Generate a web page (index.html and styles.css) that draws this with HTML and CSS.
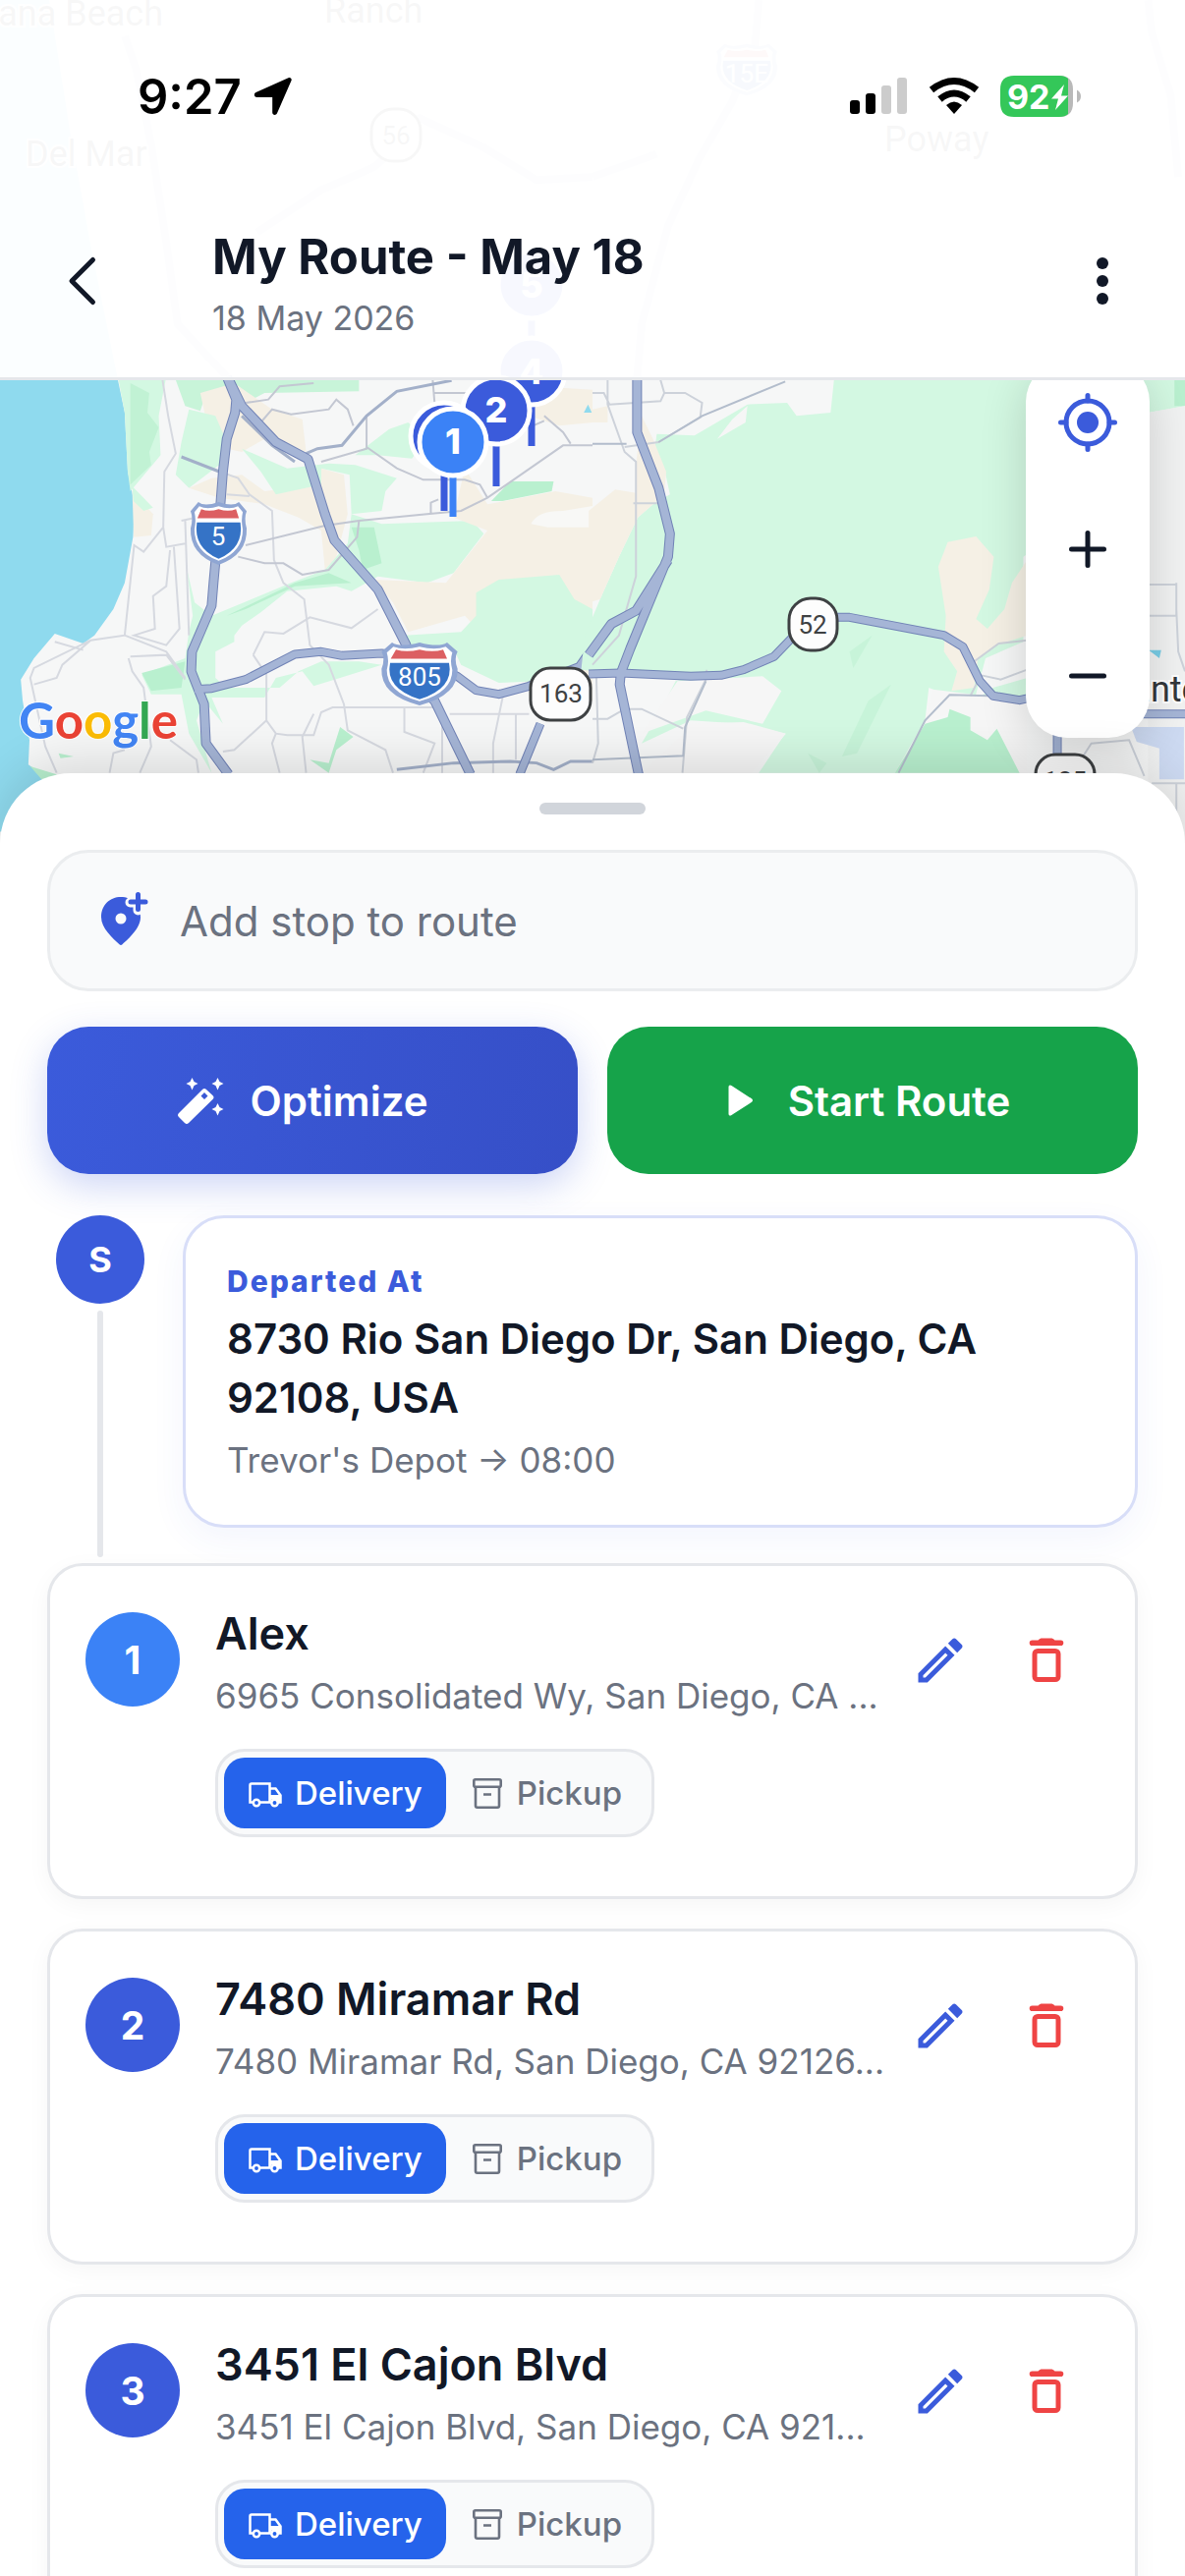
FILE: index.html
```html
<!DOCTYPE html>
<html lang="en">
<head>
<meta charset="utf-8">
<meta name="viewport" content="width=device-width, initial-scale=1">
<title>My Route - May 18</title>
<link rel="stylesheet" href="styles.css">
</head>
<body>
<svg class="sprite" aria-hidden="true">
  <symbol id="i-pencil" viewBox="0 0 24 24"><path d="M14.06 9l.94.94L5.92 19H5v-.92L14.06 9M17.66 3c-.25 0-.51.1-.7.29l-1.83 1.83 3.75 3.75 1.83-1.83c.39-.39.39-1.04 0-1.41l-2.34-2.34c-.2-.2-.45-.29-.71-.29M14.06 6.19L3 17.25V21h3.75L17.81 9.94l-3.75-3.75z" fill="currentColor"/></symbol>
  <symbol id="i-trash" viewBox="0 0 60 60"><path d="M15.500 9.500H21.500c1.500-1.500 2.500-2 4-2h9c1.500 0 2.500.5 4 2h6a2.800 2.800 0 0 1 0 5.600h-29a2.800 2.800 0 0 1 0-5.600z" fill="currentColor"/><rect x="18" y="20.500" width="24" height="29" rx="3" fill="none" stroke="currentColor" stroke-width="5"/></symbol>
  <symbol id="i-truck" viewBox="0 0 36 36"><path d="M5 27.500H2.500V10q0-1.500 1.500-1.500h18.500v19H13M22.500 13.500h6l5 7v7H31M22.500 27.500h1" fill="none" stroke="currentColor" stroke-width="2.500"/><path d="M23 20h11v7.500h-3.500a4 4 0 0 0-7.500-1z" fill="currentColor"/><circle cx="9" cy="28" r="3.200" fill="none" stroke="currentColor" stroke-width="2.500"/><circle cx="27.500" cy="28" r="3.200" fill="none" stroke="currentColor" stroke-width="2.500"/></symbol>
  <symbol id="i-box" viewBox="0 0 36 36"><g fill="none" stroke="currentColor" stroke-width="2.600"><rect x="4.300" y="4.300" width="27.400" height="7.400" rx="1.500"/><path d="M6 11.700V31q0 1.700 1.700 1.700h20.600Q30 32.700 30 31V11.700M14 19.500h8"/></g></symbol>
  <symbol id="i-shield" viewBox="0 0 60 64" preserveAspectRatio="none"><path d="M9 1q6 5 21 0q15 5 21 0l8 9q-3 7 0 17q1 26-29 36Q0 53 1 27q3-10 0-17z" fill="#8fa6d3"/><path d="M10 5q8 4 20 0q12 4 20 0l5 6q-2 8 0 17q0 22-25 31Q5 50 5 28q2-9 0-17z" fill="#fff"/><path d="M12 8q8 3 18 0q10 3 18 0l3 9H8z" fill="#dc5f62"/><path d="M7.500 21h45q4 25-22.500 36Q3.500 46 7.500 21z" fill="#3573c6"/></symbol>
</svg>

<div class="app">
  <section class="map" aria-label="Route map">
    <svg class="map-canvas" viewBox="0 0 1206 870" preserveAspectRatio="xMidYMin slice">
      <rect width="1206" height="870" fill="#f6f7f7"/>
      <!-- western half: terrain, streets, freeways -->
      <g transform="translate(0 380) scale(.3846 .3333)">
        <path d="M-10-1140H130L185-740 240-390 312 20 330 120 338 300 356 400 352 500 330 640 300 720 250 800 220 825 145 795 90 870 55 935 60 1000 78 1120 75 1195 125 1235V1400H-10z" fill="#8fdaee"/>
        <path d="M312 10H440L420 130 425 250 345 360 338 300 330 120z" fill="#d3f8e2"/>
        <path d="M345 30 395 60 390 120 420 165 395 240 400 280 345 340z" fill="#b9f0cf" opacity=".7"/>
        <path d="M350 360 405 430 400 495 354 500z" fill="#f5f0e5"/><path d="M350 345 405 410 380 420 353 390z" fill="#d3f8e2"/>
        <path d="M465 20H950V55L700 60 650 90 540 80 530 115 490 100z" fill="#c8f4d9"/>
        <path d="M530 60 620 30 720 110 800 140 810 240 700 200 640 240 560 220z" fill="#f5f0e5"/>
        <path d="M500 110 570 130 600 210 580 280 500 350 465 310 480 210z" fill="#d3f8e2"/>
        <path d="M560 320 640 310 700 360 850 340 850 290 910 310 920 430 890 560 860 600 850 480 790 440 700 400 580 380 500 350z" fill="#f5f0e5"/>
        <path d="M640 230 760 290 870 275 940 280 1050 320 1020 360 1010 420 930 430 925 310 850 290 850 340 730 370 690 300z" fill="#d3f8e2"/>
        <path d="M930 430 1010 460 1250 450 1280 490 1200 610 1130 640 1000 620 930 665 890 650 760 665 690 730 640 770 620 800 620 820 570 850 570 930 600 960 740 960 790 910 850 880 950 880 1010 890 900 930 830 955 800 910 730 930 700 990 560 990 590 1070 540 1000 520 1060 560 1220 500 1100 480 980 400 980 375 920 490 870 500 790 510 740 495 600 515 700 560 740 770 640 860 600 920 520z" fill="#d3f8e2"/>
        <path d="M950 540 930 470 990 470 1010 580 960 600zM600 740 780 640 870 610 930 640 780 650 650 720zM375 915 490 880 480 960 400 970zM1300 390 1350 330 1465 330 1460 360 1330 390z" fill="#b9f0cf"/>
        <path d="M940 250 1030 170 1080 150 1130 200 1090 260 1000 250z" fill="#d3f8e2"/>
        <path d="M1290 60 1420 40 1568 50V150L1480 160 1400 130zM1230 290 1290 400 1470 360 1568 380V1000H1440L1230 740 1080 790 1040 700 990 630 1180 640 1290 480 1200 440z" fill="#f5f0e5"/>
        <path d="M1405 460Q1420 420 1490 420L1568 405V470H1450z" fill="#f8f8f6"/>
        <path d="M1260 670 1320 630 1480 615 1520 690 1568 720V890L1430 940 1320 945 1220 890 1200 840 1080 830 1070 800 1220 790 1260 740z" fill="#d3f8e2"/>
        <path d="M900 1080 935 1110 890 1150 870 1220 820 1180 870 1190zM155 1160 195 1170 160 1175zM80 1200 150 1225V1240H110z" fill="#b9f0cf"/>
        <path d="M1545 120 1556 95 1566 120z" fill="#8fdaee"/>
        <path d="M430 20 445 130 465 245 435 300 432 470 380 545 355 525 330 800 240 815 90 900 80 930 120 1140 150 1220M580 300 630 320 660 370 720 420 725 570 750 640 805 690 820 830 870 890 910 1010 920 1090 1020 1150 1040 1220M432 470 440 530 490 520M460 530 475 780 440 830 355 800 410 780 405 680 440 650 450 540M480 450 520 440M490 450 500 800M340 870 350 910 380 960 400 1140 370 1220M345 865 440 860 490 935M330 800 440 850 490 930M145 820 220 845M90 950 150 930 165 890 240 815M290 1220 300 1160 330 1150M450 1120 520 1180 525 1220M670 860 700 790 750 795 820 745 930 778 1000 720M670 860 705 920V1060L620 1150 590 1155M705 1060 730 1100 760 1105 830 1105 850 1035 880 1020H1170V1220M830 1040 800 1110 810 1220M730 1100 720 1130 740 1220M1070 1020V1095L1150 1130 1120 1220M1190 1040H1400M1330 990 1305 1130V1220M1365 1040V1180M600 370 660 375" fill="none" stroke="#d6d9e0" stroke-width="2" vector-effect="non-scaling-stroke"/>
        <path d="M650 525 860 465 950 450 1130 430 1220 420 1290 380 1490 220H1568M950 450 945 500 870 600 800 615 750 580 700 580 630 560M690 150 720 110 770 125 870 110 890 80 920 110 935 160M970 130V230L850 270M970 225 1050 290 1120 325H1230L1270 340 1290 380M1140 430V395L1160 385M1145 20 1150 90 1200 90M1150 60H1240M1440 130 1490 180 1510 215M1410 160 1440 145M650 90 710 80 740 40 830 30" fill="none" stroke="#c3c7d2" stroke-width="2" vector-effect="non-scaling-stroke"/>
        <path d="M810 245 840 230 905 220 970 130 1050 55 1195 22M480 255 580 300M640 130 720 220 780 270M1050 1210 1200 1190 1350 1185 1420 1190 1465 1210 1510 1185H1568" fill="none" stroke="#a3b0c9" stroke-width="3" vector-effect="non-scaling-stroke"/>
        <g fill="none" stroke-linejoin="round">
          <g stroke="#7183b6">
            <path d="M600 10 625 80 622 120 600 200 590 300 580 450 565 640 560 710 508 850 506 910 540 1010 545 1130 605 1225" stroke-width="10" vector-effect="non-scaling-stroke"/>
            <path d="M606 20 640 100 730 210 815 262 860 430 885 510 1000 660 1075 830 1110 960 1150 1000 1245 1225" stroke-width="10" vector-effect="non-scaling-stroke"/>
            <path d="M515 965 560 962 650 935 780 858 850 850 905 862 1010 855 1110 870 1210 925 1260 968 1320 980 1400 955 1568 880M1530 900 1590 800M1375 1225 1430 1070" stroke-width="9" vector-effect="non-scaling-stroke"/>
          </g>
          <g stroke="#a5b5d6">
            <path d="M600 10 625 80 622 120 600 200 590 300 580 450 565 640 560 710 508 850 506 910 540 1010 545 1130 605 1225" stroke-width="8" vector-effect="non-scaling-stroke"/>
            <path d="M606 20 640 100 730 210 815 262 860 430 885 510 1000 660 1075 830 1110 960 1150 1000 1245 1225" stroke-width="8" vector-effect="non-scaling-stroke"/>
            <path d="M515 965 560 962 650 935 780 858 850 850 905 862 1010 855 1110 870 1210 925 1260 968 1320 980 1400 955 1568 880M1530 900 1590 800M1375 1225 1430 1070" stroke-width="7" vector-effect="non-scaling-stroke"/>
          </g>
          <path d="M330-1030 360-930 400-700 440-400 470-150 600 10M680-430 850-560 990-630 1050-690 1110-780 1280-690 1420-590 1568-600" stroke="#c6d0e4" stroke-width="8" vector-effect="non-scaling-stroke"/>
        </g>
      </g>
      <!-- eastern half -->
      <g transform="translate(603 380) scale(.3846 .3333)">
        <path d="M640 10H1568V100L1470 120V300L1140 560V820L1040 870 1010 1000 1060 960 1150 930 1160 980 1000 1010 890 960 880 1060 800 1220H440L510 1100 400 1070 260 1060 130 1130 180 1030 220 940 300 915 60 915-30 905-20 800 20 690 70 560 120 440 165 395 205 370 190 290 165 230 170 185 270 190 410 95 515 90 540 130 630 120z" fill="#d3f8e2"/>
        <path d="M130 130 160 200 195 300 190 370 120 440 70 560 20 690-10 700V420L60 355 115 365 115 280zM0 110 40 100V150H0z" fill="#f5f0e5"/>
        <path d="M940 515 1015 498 1062 560 1050 660 1015 750 1045 780 1090 720 1110 640 1150 570V800L1070 830 1020 870 1010 960 950 970 965 910 930 850 935 740 915 590z" fill="#f5f0e5"/>
        <path d="M330 200 370 140 410 100 405 150zM225 940 450 925 500 970 450 1070 300 1030 130 1100zM250 1070 400 1065 512 1100 420 1220H130L240 1100zM900 965 1040 985 1150 1000V1220H1110L1070 1080 1045 1120 940 1040 880 1070z" fill="#f6f6f6"/>
        <path d="M940 1050 945 1025 1000 1050 1000 1090 1045 1120 1070 1085 1130 1220H800L880 1070zM1540 20H1568V100H1540z" fill="#b9f0cf"/>
        <path d="M740 800 690 900 680 850zM790 950 700 1160 660 1170 730 1000zM570 1160 620 1190 600 1220z" fill="#bff2d3" opacity=".6"/>
        <path d="M1470 120 1568 100V1400H1470z" fill="#f1f2f2"/>
        <path d="M1425 1080H1565V1240H1500V1145L1440 1125z" fill="#cddaf2"/>
        <path d="M1472 845H1505L1500 870z" fill="#79cde6"/>
        <path d="M40 20V95L85 240 115 270V620L70 800 0 890M0 60H30L45 95 180 85 190 60H245L290 90 285 135 175 210 85 225M180 20 190 60M108 397H175M0 1055 40 1055 85 1025H130L240 1085M10 920 15 1130 0 1190M302 905V930L250 1050 238 1220M1010 880 1075 825 1150 815M1020 920 1080 935 1150 905M1470 645H1545V720L1550 850 1568 910M1470 740H1545V640M1270 1220 1320 1130 1420 1120 1460 1230M1480 1252H1568M1545 1250V1400M1000 985 1020 940" fill="none" stroke="#cdd2da" stroke-width="2" vector-effect="non-scaling-stroke"/>
        <path d="M510 25 290 130 175 210M0 1180 240 1168 245 1080 300 940M0 215H90M810 1220 880 1060 945 982 1050 985" fill="none" stroke="#b3bdcc" stroke-width="2" vector-effect="non-scaling-stroke"/>
        <g fill="none" stroke-linejoin="round">
          <path d="M118 10V180L175 350 205 490 200 560 100 840 75 915 72 950 122 1225M-10 860 50 765 115 725 200 570" stroke="#7183b6" stroke-width="10" vector-effect="non-scaling-stroke"/>
          <path d="M-10 918 75 915 260 925 340 922 400 905 480 865 580 745H680L930 800 980 835 1025 940 1060 985 1130 998 1200 980 1400 1040H1568M1230 1100V1180" stroke="#7183b6" stroke-width="9" vector-effect="non-scaling-stroke"/>
          <path d="M118 10V180L175 350 205 490 200 560 100 840 75 915 72 950 122 1225M-10 860 50 765 115 725 200 570" stroke="#a5b5d6" stroke-width="8" vector-effect="non-scaling-stroke"/>
          <path d="M-10 918 75 915 260 925 340 922 400 905 480 865 580 745H680L930 800 980 835 1025 940 1060 985 1130 998 1200 980 1400 1040H1568M1230 1100V1180" stroke="#a5b5d6" stroke-width="7" vector-effect="non-scaling-stroke"/>
          <path d="M440-1140 430-1000 370-830 280-650 200-450 130-150 118 10M0-600 170-670M1470-1140 1480-1040 1530-850 1550-600" stroke="#c6d0e4" stroke-width="8" vector-effect="non-scaling-stroke"/>
        </g>
      </g>
      <!-- highway shields -->
      <use href="#i-shield" x="193" y="510" width="59" height="66"/>
      <use href="#i-shield" x="387" y="653" width="80" height="66"/>
      <use href="#i-shield" x="728" y="44" width="64" height="54"/>
      <g fill="#fdfdfd" stroke="#3e4143" stroke-width="3">
        <rect x="540" y="680" width="61" height="53" rx="20"/>
        <rect x="803" y="609" width="49" height="53" rx="22"/>
        <rect x="1054" y="768" width="60" height="53" rx="20"/>
        <rect x="378" y="111" width="50" height="53" rx="22"/>
      </g>
      <g class="map-shield-text">
        <text x="222" y="555" fill="#fff">5</text>
        <text x="427" y="698" fill="#fff">805</text>
        <text x="760" y="84" fill="#fff">15E</text>
        <text x="571" y="715">163</text>
        <text x="827" y="645">52</text>
        <text x="1084" y="804">125</text>
        <text x="403" y="147">56</text>
      </g>
      <g class="map-place">
        <text x="166" y="26" text-anchor="end">Solana Beach</text>
        <text x="330" y="23">Ranch</text>
        <text x="26" y="169">Del Mar</text>
        <text x="900" y="154">Poway</text>
        <text x="1130" y="714">Santee</text>
      </g>
      <text class="map-logo" x="19" y="752"><tspan fill="#4285f4">G</tspan><tspan fill="#ea4335">o</tspan><tspan fill="#fbbc05">o</tspan><tspan fill="#4285f4">g</tspan><tspan fill="#34a853">l</tspan><tspan fill="#ea4335">e</tspan></text>
      <!-- stop pins -->
      <g stroke-width="7" fill="none">
        <path d="M541 325V343M541 410V454M505 450V495M452 480V520" stroke="#3b5bdb"/><path d="M461 485V526" stroke="#3b82f6"/>
      </g>
      <g fill="#3b5bdb" stroke="#fff" stroke-width="5">
        <circle cx="541" cy="290" r="34"/><circle cx="541" cy="378" r="34"/><circle cx="505" cy="418" r="34"/><circle cx="452" cy="444" r="34"/><circle cx="461" cy="450" r="34" fill="#3b82f6"/>
      </g>
      <g class="map-pin-text">
        <text x="541" y="303">5</text><text x="541" y="391">4</text><text x="505" y="430">2</text><text x="461" y="462">1</text>
      </g>
    </svg>
    <div class="map-controls">
      <button type="button" aria-label="My location"><svg viewBox="0 0 60 60"><g fill="none" stroke="#3b5bdb" stroke-width="5" stroke-linecap="round"><circle cx="30" cy="30" r="22"/><path d="M30 2.500V8M30 52v5.500M2.500 30H8M52 30h5.500"/></g><circle cx="30" cy="30" r="11" fill="#3b5bdb"/></svg></button>
      <button type="button" aria-label="Zoom in"><svg viewBox="0 0 60 60"><path d="M30 13.500v33M13.500 30h33" stroke="#111827" stroke-width="5" stroke-linecap="round"/></svg></button>
      <button type="button" aria-label="Zoom out"><svg viewBox="0 0 60 60"><path d="M13.500 30h33" stroke="#111827" stroke-width="5" stroke-linecap="round"/></svg></button>
    </div>
  </section>

  <header class="top">
    <div class="status">
      <div class="status-time"><span>9:27</span>
        <svg width="40" height="40" viewBox="0 0 40 40"><path d="M35.500 1.200c2-.9 3.800.9 3 2.900L24 37.300c-1.200 2.700-4.800 2-4.800-.8V21H3.500C.5 21-.1 17.300 2.500 16.100z" fill="#000"/></svg>
      </div>
      <div class="status-icons">
        <svg width="60" height="40" viewBox="0 0 60 40"><rect x="1" y="24" width="10" height="14" rx="3"/><rect x="17" y="17" width="10" height="21" rx="3"/><rect x="33" y="9" width="10" height="29" rx="3" fill="#ccc"/><rect x="49" y="1" width="10" height="37" rx="3" fill="#ccc"/></svg>
        <svg width="52" height="40" viewBox="0 0 52 40"><g fill="none" stroke="#000" stroke-width="7"><path d="M3 13.500Q26-4.500 49 13.500"/><path d="M11.500 23Q26 11 40.500 23"/></g><path d="M18 29q8-7 16 0l-8 9z"/></svg>
        <svg width="84" height="42" viewBox="0 0 84 42"><path d="M14 0h46q14 0 14 14v14q0 14-14 14z" fill="#b9b9b9"/><path d="M14 0h46q6 0 9 3v36q-3 3-9 3H14Q0 42 0 28V14Q0 0 14 0z" fill="#34c759"/><path d="M78 14.500q4 2 4 6.500t-4 6.500z" fill="#b9b9b9"/><text class="battery-text" x="7" y="34">92</text><path d="M65 9 52 23.500h7L56 35l13-14.500h-7z" fill="#fff"/></svg>
      </div>
    </div>
    <div class="bar">
      <button type="button" class="icon-btn" aria-label="Back"><svg width="60" height="60" viewBox="0 0 60 60"><path d="M40.500 8.500 19 30l21.500 21.500" fill="none" stroke="#111827" stroke-width="5" stroke-linecap="round" stroke-linejoin="round"/></svg></button>
      <div class="bar-text">
        <h1>My Route - May 18</h1>
        <p>18 May 2026</p>
      </div>
      <button type="button" class="icon-btn" aria-label="More options"><svg width="60" height="60" viewBox="0 0 60 60" fill="#111827"><circle cx="30" cy="12" r="6"/><circle cx="30" cy="30" r="6"/><circle cx="30" cy="48" r="6"/></svg></button>
    </div>
  </header>

  <main class="sheet">
    <div class="handle"></div>
    <label class="search">
      <svg width="60" height="60" viewBox="0 0 60 60"><path d="M30 6c11 0 20 8 20 20.500C50 38 38 48 31.500 54.300q-1.500 1.400-3 0C22 48 10 38 10 26.500 10 14 19 6 30 6z" fill="#3b5bdb"/><circle cx="30" cy="28" r="5.500" fill="#f9fafb"/><path d="M47.500 3.500v16M39.500 11.500h16" stroke="#f9fafb" stroke-width="10" stroke-linecap="round"/><path d="M47.500 3.500v15M40 11h15" stroke="#3b5bdb" stroke-width="5" stroke-linecap="round"/></svg>
      <input type="text" placeholder="Add stop to route" aria-label="Add stop to route">
    </label>
    <div class="actions">
      <button type="button" class="action optimize"><svg width="54" height="54" viewBox="0 0 54 54"><g fill="#fff"><path d="M29 16q2-2 4 0l6.500 6q2 2 0 4L15 50q-2 2-4 0l-6-6q-2-2 0-4zM31 19l-3.500 3.500L31 26l3.500-3.500z" fill-rule="evenodd"/><path id="spark" d="M18.500 4l2 4 4 2-4 2-2 4.500-2-4.500-4-2 4-2z"/><use href="#spark" x="26"/><use href="#spark" x="26" y="26"/></g></svg><span>Optimize</span></button>
      <button type="button" class="action start"><svg width="54" height="54" viewBox="0 0 54 54"><path d="M17.500 13.500c0-2 1.500-2.600 3-1.500l20.500 13.300c1.300 1 1.300 2.500 0 3.500L20.500 42c-1.500 1.100-3 .5-3-1.500z" fill="#fff"/></svg><span>Start Route</span></button>
    </div>

    <section class="depot">
      <div class="rail"><span class="depot-dot">S</span><span class="rail-line"></span></div>
      <article class="depot-card">
        <p class="depot-label">Departed At</p>
        <h2>8730 Rio San Diego Dr, San Diego, CA 92108, USA</h2>
        <p class="muted">Trevor's Depot → 08:00</p>
      </article>
    </section>

    <ol class="stops">
      <li class="stop">
        <span class="badge next">1</span>
        <div class="stop-text"><h2>Alex</h2><p class="muted">6965 Consolidated Wy, San Diego, CA ...</p></div>
        <div class="stop-tools">
          <button type="button" class="edit" aria-label="Edit Alex"><svg><use href="#i-pencil"/></svg></button>
          <button type="button" class="delete" aria-label="Delete Alex"><svg><use href="#i-trash"/></svg></button>
        </div>
        <div class="toggle" role="radiogroup" aria-label="Stop type">
          <label><input type="radio" name="type1" checked><svg><use href="#i-truck"/></svg>Delivery</label>
          <label><input type="radio" name="type1"><svg><use href="#i-box"/></svg>Pickup</label>
        </div>
      </li>
      <li class="stop">
        <span class="badge">2</span>
        <div class="stop-text"><h2>7480 Miramar Rd</h2><p class="muted">7480 Miramar Rd, San Diego, CA 92126...</p></div>
        <div class="stop-tools">
          <button type="button" class="edit" aria-label="Edit 7480 Miramar Rd"><svg><use href="#i-pencil"/></svg></button>
          <button type="button" class="delete" aria-label="Delete 7480 Miramar Rd"><svg><use href="#i-trash"/></svg></button>
        </div>
        <div class="toggle" role="radiogroup" aria-label="Stop type">
          <label><input type="radio" name="type2" checked><svg><use href="#i-truck"/></svg>Delivery</label>
          <label><input type="radio" name="type2"><svg><use href="#i-box"/></svg>Pickup</label>
        </div>
      </li>
      <li class="stop">
        <span class="badge">3</span>
        <div class="stop-text"><h2>3451 El Cajon Blvd</h2><p class="muted">3451 El Cajon Blvd, San Diego, CA 921...</p></div>
        <div class="stop-tools">
          <button type="button" class="edit" aria-label="Edit 3451 El Cajon Blvd"><svg><use href="#i-pencil"/></svg></button>
          <button type="button" class="delete" aria-label="Delete 3451 El Cajon Blvd"><svg><use href="#i-trash"/></svg></button>
        </div>
        <div class="toggle" role="radiogroup" aria-label="Stop type">
          <label><input type="radio" name="type3" checked><svg><use href="#i-truck"/></svg>Delivery</label>
          <label><input type="radio" name="type3"><svg><use href="#i-box"/></svg>Pickup</label>
        </div>
      </li>
    </ol>
  </main>
</div>
</body>
</html>
```
FILE: styles.css
```css
* { box-sizing: border-box; }

html, body { height: 100%; }

body {
  margin: 0;
  overflow: hidden;
  background: #fff;
  color: #111827;
  font-family: Inter, "Liberation Sans", sans-serif;
}

h1, h2, p, ol { margin: 0; padding: 0; }

button {
  border: 0;
  padding: 0;
  background: none;
  color: inherit;
  font: inherit;
}

svg { display: block; flex: none; }

.sprite { position: absolute; width: 0; height: 0; }

.app {
  position: relative;
  height: 100%;
  overflow: hidden;
}

/* Map */
.map { position: relative; height: 867px; }
.map-canvas { width: 100%; height: 100%; }

.map-shield-text { font: 400 26px Roboto, sans-serif; fill: #3e4143; text-anchor: middle; }
.map-place { font: 400 36px Roboto, sans-serif; fill: #33373b; stroke: #fff; stroke-width: 4px; paint-order: stroke; }
.map-logo { font: 700 51px Lato, sans-serif; stroke: #fff; stroke-width: 2px; paint-order: stroke; }
.map-pin-text { font: 800 36px Inter, sans-serif; fill: #fff; text-anchor: middle; }

.map-controls {
  position: absolute;
  top: 367px;
  right: 36px;
  display: grid;
  gap: 3px;
  width: 126px;
  border-radius: 42px;
  background: #fff;
  box-shadow: 0 12px 48px rgba(0, 0, 0, .16);
}
.map-controls button { display: grid; place-items: center; height: 126px; }
.map-controls svg { width: 60px; height: 60px; }

/* Translucent header over the map */
.top {
  position: absolute;
  inset: 0 0 auto;
  border-bottom: 3px solid #e5e7eb;
  background: rgba(255, 255, 255, .96);
}

.status {
  display: flex;
  justify-content: space-between;
  align-items: center;
  height: 196px;
  padding: 0 104px 0 140px;
  color: #000;
}
.status-time { display: flex; align-items: center; gap: 12px; font-size: 49px; font-weight: 600; }
.status-icons { display: flex; align-items: center; gap: 21px; }
.battery-text { font: 700 34px Inter, sans-serif; fill: #fff; }

.bar {
  display: flex;
  align-items: center;
  height: 188px;
  padding: 0 30px;
}
.icon-btn { display: grid; place-items: center; width: 108px; height: 108px; margin-bottom: 9px; }
.bar-text { flex: 1; padding-left: 78px; }
.bar h1 { font-size: 49px; font-weight: 700; line-height: 66px; }
.bar p { color: #6b7280; font-size: 34px; line-height: 57px; }

/* Bottom sheet */
.sheet {
  position: relative;
  margin-top: -80px;
  padding: 30px 48px 48px;
  border-radius: 72px 72px 0 0;
  background: #fff;
  box-shadow: 0 -12px 48px rgba(0, 0, 0, .12);
}
.handle { width: 108px; height: 12px; margin: 0 auto 36px; border-radius: 6px; background: #d1d5db; }

.search {
  display: flex;
  align-items: center;
  gap: 30px;
  height: 144px;
  padding: 0 42px;
  border: 3px solid #ebedef;
  border-radius: 42px;
  background: #f9fafb;
}
.search input {
  flex: 1;
  min-width: 0;
  border: 0;
  padding: 0;
  outline: 0;
  background: none;
  color: #111827;
  font: 400 42px Inter, sans-serif;
}
.search input::placeholder { color: #6b7280; opacity: 1; }

.actions { display: grid; grid-template-columns: 1fr 1fr; gap: 30px; margin-top: 36px; }
.action {
  display: flex;
  justify-content: center;
  align-items: center;
  gap: 24px;
  height: 150px;
  padding-right: 24px;
  border-radius: 42px;
  color: #fff;
  font-size: 42px;
  font-weight: 600;
}
.optimize { background: linear-gradient(100deg, #3b5bdb, #364fc7); box-shadow: 0 12px 36px rgba(59, 91, 219, .25); }
.start { background: #16a34a; }

/* Departure */
.depot { display: flex; gap: 30px; margin-top: 42px; }
.rail { display: flex; flex-direction: column; align-items: center; gap: 7px; width: 108px; }
.depot-dot {
  display: grid;
  place-items: center;
  width: 90px;
  height: 90px;
  border-radius: 50%;
  background: #3b5bdb;
  color: #fff;
  font-size: 36px;
  font-weight: 700;
}
.rail-line { flex: 1; width: 6px; border-radius: 3px; background: #e5e7eb; }
.depot-card {
  flex: 1;
  margin-bottom: 30px;
  padding: 42px 42px 39px;
  border: 3px solid #d8def8;
  border-radius: 42px;
  background: #fff;
  box-shadow: 0 12px 36px rgba(59, 91, 219, .06);
}
.depot-label { color: #3b5bdb; font-size: 30px; font-weight: 800; letter-spacing: 2px; line-height: 45px; }
.depot-card h2 { margin: 6px 0; font-size: 42px; font-weight: 600; line-height: 60px; }
.muted { color: #6b7280; font-size: 35px; line-height: 54px; }

/* Stops */
.stops { display: grid; gap: 30px; margin-top: 6px; list-style: none; }
.stop {
  display: grid;
  grid-template-columns: 96px 1fr auto;
  align-items: start;
  padding: 39px 36px 60px;
  border: 3px solid #e5e7eb;
  border-radius: 36px;
  background: #fff;
  box-shadow: 0 6px 24px rgba(0, 0, 0, .04);
}
.badge {
  display: grid;
  place-items: center;
  width: 96px;
  height: 96px;
  margin-top: 8px;
  border-radius: 50%;
  background: #3b5bdb;
  color: #fff;
  font-size: 39px;
  font-weight: 700;
}
.badge.next { background: #3b82f6; }
.stop-text { min-width: 0; padding-left: 36px; }
.stop-text h2 { margin-bottom: 6px; font-size: 45px; font-weight: 600; line-height: 60px; }
.stop-text .muted { overflow: hidden; text-overflow: ellipsis; white-space: nowrap; }
.stop-tools { display: flex; }
.stop-tools button { display: grid; place-items: center; width: 108px; height: 114px; }
.stop-tools svg { width: 60px; height: 60px; }
.edit { color: #3b5bdb; }
.delete { color: #ef4444; }

.toggle {
  grid-column: 2 / -1;
  justify-self: start;
  display: flex;
  margin: 27px 0 0 36px;
  padding: 6px;
  border: 3px solid #e5e7eb;
  border-radius: 30px;
  background: #f9fafb;
}
.toggle label {
  display: flex;
  align-items: center;
  gap: 12px;
  height: 72px;
  padding: 0 24px;
  border-radius: 21px;
  color: #6b7280;
  font-size: 33px;
  font-weight: 500;
}
.toggle label:has(:checked) { background: #2563eb; color: #fff; }
.toggle input { position: absolute; opacity: 0; pointer-events: none; }
.toggle svg { width: 36px; height: 36px; }
```
